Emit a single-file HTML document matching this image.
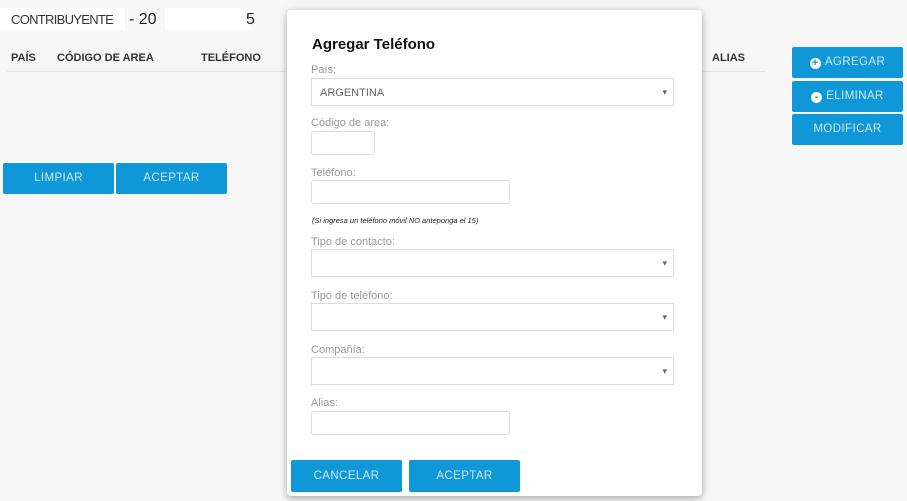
<!DOCTYPE html><html><head><style>
body{margin:0;width:907px;height:501px;background:#f7f7f7;font-family:"Liberation Sans",sans-serif;position:relative;overflow:hidden}
.a{position:absolute}
.btn{position:absolute;background:#0f97d8;color:#cfe9f7;font-size:11.5px;text-align:center;border-radius:2px;letter-spacing:.4px}
.th{font-size:11px;font-weight:bold;color:#333}
.lbl{position:absolute;left:24px;font-size:11px;color:#999}
.inp{position:absolute;left:24px;border:1px solid #ddd;border-radius:3px;background:#fff;box-sizing:border-box}
.sel{width:363px;height:28px;border-radius:0}
.sel:after{content:"▾";position:absolute;right:6px;top:8px;font-size:9px;color:#666}
.ic{display:inline-block;width:11px;height:11px;border-radius:50%;background:#fff;color:#0f97d8;font-size:11px;line-height:11px;font-weight:bold;vertical-align:-1px;margin-right:4px}
</style></head><body>
<div class="a" style="left:0;top:8px;width:125px;height:22px;background:#fff"></div>
<div class="a" style="left:165px;top:8px;width:85px;height:22px;background:#fff"></div>
<div class="a" style="left:11px;top:12px;font-size:13px;color:#333;letter-spacing:-.7px">CONTRIBUYENTE</div>
<div class="a" style="left:129px;top:11px;font-size:16px;color:#222">- 20</div>
<div class="a" style="left:246px;top:11px;font-size:16px;color:#222">5</div>
<div class="a th" style="left:11px;top:52px">PAÍS</div>
<div class="a th" style="left:57px;top:52px">CÓDIGO DE AREA</div>
<div class="a th" style="left:201px;top:52px">TELÉFONO</div>
<div class="a th" style="left:712px;top:52px">ALIAS</div>
<div class="a" style="left:7px;top:71px;width:282px;height:1px;background:#e2e2e2"></div>
<div class="a" style="left:700px;top:71px;width:65px;height:1px;background:#e2e2e2"></div>
<div class="btn" style="left:3px;top:163px;width:111px;height:31px;line-height:31px">LIMPIAR</div>
<div class="btn" style="left:116px;top:163px;width:111px;height:31px;line-height:31px">ACEPTAR</div>
<div class="btn" style="left:792px;top:47px;width:111px;height:31px;line-height:31px"><span class="ic">+</span>AGREGAR</div>
<div class="btn" style="left:792px;top:81px;width:111px;height:31px;line-height:31px"><span class="ic">-</span>ELIMINAR</div>
<div class="btn" style="left:792px;top:114px;width:111px;height:31px;line-height:31px">MODIFICAR</div>
<div class="a" style="left:287px;top:10px;width:415px;height:486px;background:#fff;border-radius:4px;box-shadow:0 2px 8px rgba(0,0,0,.35)">
<div class="a" style="left:25px;top:26px;font-size:15px;font-weight:bold;color:#111">Agregar Teléfono</div>
<div class="lbl" style="top:54px">País:</div>
<div class="inp sel" style="top:68px"><span class="a" style="left:8px;top:8px;font-size:11px;color:#666">ARGENTINA</span></div>
<div class="lbl" style="top:107px">Código de area:</div>
<div class="inp" style="top:121px;width:64px;height:24px"></div>
<div class="lbl" style="top:157px">Teléfono:</div>
<div class="inp" style="top:170px;width:199px;height:24px"></div>
<div class="a" style="left:25px;top:206px;font-size:7.5px;font-style:italic;color:#222">(Si ingresa un teléfono móvil NO anteponga el 15)</div>
<div class="lbl" style="top:226px">Tipo de contacto:</div>
<div class="inp sel" style="top:239px"></div>
<div class="lbl" style="top:280px">Tipo de teléfono:</div>
<div class="inp sel" style="top:293px"></div>
<div class="lbl" style="top:334px">Compañía:</div>
<div class="inp sel" style="top:347px"></div>
<div class="lbl" style="top:387px">Alias:</div>
<div class="inp" style="top:401px;width:199px;height:24px"></div>
<div class="btn" style="left:4px;top:450px;width:111px;height:32px;line-height:32px">CANCELAR</div>
<div class="btn" style="left:122px;top:450px;width:111px;height:32px;line-height:32px">ACEPTAR</div>
</div>
</body></html>
